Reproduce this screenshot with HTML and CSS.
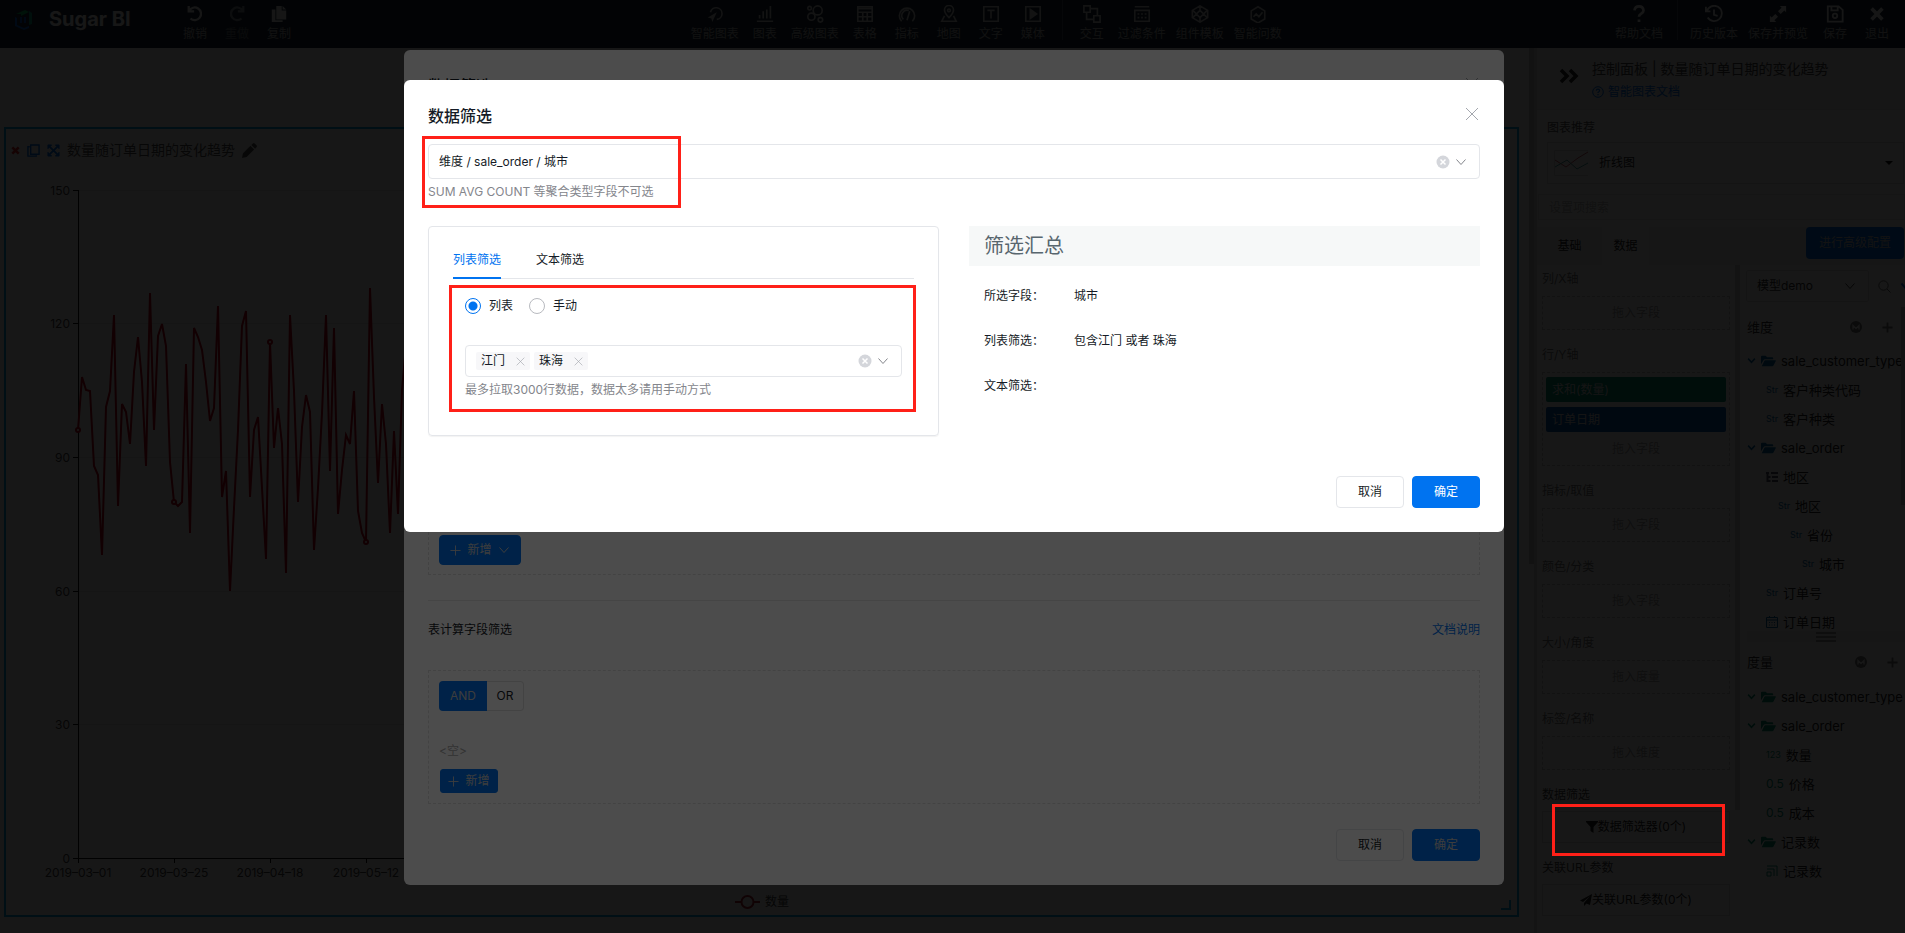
FILE: index.html
```html
<!DOCTYPE html>
<html lang="zh-CN">
<head>
<meta charset="utf-8">
<title>Sugar BI</title>
<link rel="stylesheet" href="styles.css">
</head>
<body>
<svg class="defs" aria-hidden="true">
  <symbol id="i-close" viewBox="0 0 14 14"><path d="M1 1l12 12M13 1L1 13"/></symbol>
  <symbol id="i-down" viewBox="0 0 12 12"><path d="M1.500 3.500L6 8.500l4.500-5"/></symbol>
  <symbol id="i-plus" viewBox="0 0 12 12"><path d="M6 .5v11M.5 6h11"/></symbol>
  <symbol id="i-clear" viewBox="0 0 14 14"><circle cx="7" cy="7" r="6.500" fill="#d4d6db" stroke="none"/><path d="M4.500 4.500l5 5M9.500 4.500l-5 5" stroke="#fff" stroke-width="1.500"/></symbol>
  <symbol id="i-folder" viewBox="0 0 16 12"><path d="M0 9.500V1.500Q0 .5 1 .5h4l1.500 1.500H12q1 0 1 1v1.200H4.200Q3.300 4.200 2.800 5zM.8 11.500L3.500 6Q3.800 5.300 4.600 5.300H15.300q.9 0 .5.800L13.300 10.800q-.4.700-1.200.7z" fill="currentColor" stroke="none"/></symbol>
  <symbol id="i-m" viewBox="0 0 12 12"><circle cx="6" cy="6" r="6" fill="currentColor" stroke="none"/><path d="M3 8.500v-4l3 3 3-3v4" stroke="#fff" stroke-width="1.300"/></symbol>
</svg>

<header class="topbar">
  <div class="brand">
    <svg class="logo" width="20" height="22" viewBox="0 0 20 22"><path d="M2 6l9-4 4 2-8 4v-2z" fill="#00c060"/><path d="M15 3l3 2v11l-3 1z" fill="#00a08a"/><path d="M1 9l2 1v7l7 3 5-2v2l-5 2-9-4z" fill="#0a6ae0"/><path d="M6 9h2v6H6zM10 9h2v6h-2z" fill="#0a5ad0"/></svg>
    <span class="brand-name">Sugar BI</span>
  </div>
  <nav class="tools tools-edit">
    <button class="tool"><svg viewBox="0 0 20 20"><path d="M3 1v6h6M3.500 6.500A7 7 0 1 1 5 15" stroke-width="2.500"/></svg>撤销</button>
    <button class="tool faded"><svg viewBox="0 0 20 20"><path d="M17 1v6h-6M16.500 6.500A7 7 0 1 0 15 15" stroke-width="2.500"/></svg>重做</button>
    <button class="tool"><svg viewBox="0 0 20 20"><path d="M7 1h6v5h5v10H7zM14 1l4 4h-4zM2 5h4v12h8v2H2z" fill="currentColor" stroke="none"/></svg>复制</button>
  </nav>
  <i class="space-a"></i>
  <nav class="tools tools-add">
    <button class="tool"><svg viewBox="0 0 20 20"><path d="M5 8a6.500 6.500 0 1 1 7 8"/><path d="M12 8L2 14l4 1 1 4z" fill="currentColor" stroke="none"/></svg>智能图表</button>
    <button class="tool"><svg viewBox="0 0 20 20"><path d="M1 18h18M4 15v-4M8 15V7M12 15V5M16 15V1"/></svg>图表</button>
    <button class="tool"><svg viewBox="0 0 20 20"><circle cx="4" cy="3.500" r="2"/><circle cx="13" cy="6" r="5"/><circle cx="6" cy="13" r="4"/><circle cx="16" cy="16.500" r="2.500"/></svg>高级图表</button>
    <button class="tool wide-gap"><svg viewBox="0 0 20 20"><path d="M2 2h16v16H2zM2 4h16M2 8h16M2 13h16M7.500 8v10M12.500 8v10"/></svg>表格</button>
    <button class="tool wide-gap"><svg viewBox="0 0 20 20"><path d="M4 18a8.500 8.500 0 1 1 12 0M6 16a6 6 0 0 1 6-10M10 17l3-10"/></svg>指标</button>
    <button class="tool wide-gap"><svg viewBox="0 0 20 20"><path d="M10 14Q5 9 5 5.500a5 5 0 0 1 10 0Q15 9 10 14zM5 12l-3 6h16l-3-6"/><circle cx="10" cy="6" r="1.500"/></svg>地图</button>
    <button class="tool wide-gap"><svg viewBox="0 0 20 20"><path d="M2 2h16v16H2zM6 6h8M10 6v9"/></svg>文字</button>
    <button class="tool"><svg viewBox="0 0 20 20"><path d="M2 2h16v16H2z"/><path d="M7 5l7 5-7 5z" fill="currentColor"/></svg>媒体</button>
    <i class="bar-line"></i>
    <button class="tool"><svg viewBox="0 0 20 20"><path d="M1 1h7v7H1zM12 12h7v7h-7zM8 4h8v8M4 8v8h8"/></svg>交互</button>
    <button class="tool tight-gap"><svg viewBox="0 0 20 20"><path d="M2 2h16M2 6h16v12H2zM5 10h2M9 10h2M13 10h2M5 14h2M9 14h2M13 14h2"/></svg>过滤条件</button>
    <button class="tool tight-gap"><svg viewBox="0 0 20 20"><path d="M10 1l8.500 5v8L10 19l-8.500-5V6zM10 1v5M10 14v5M2 6l4 4-4 4M18 6l-4 4 4 4M10 6l4 4-4 4-4-4z"/></svg>组件模板</button>
    <button class="tool"><svg viewBox="0 0 20 20"><path d="M10 2l7.500 4.500v9L10 20l-7.500-4.500v-9zM5 13l3-3 3 3 4-5"/></svg>智能问数</button>
  </nav>
  <i class="space-b"></i>
  <nav class="tools tools-file">
    <button class="tool"><svg viewBox="0 0 20 20"><path d="M5 6q.5-4.500 5-4.500T15 6q0 2-2.500 3.500Q10 11 10 13M10 16v3" stroke-width="3"/></svg>帮助文档</button>
    <i class="bar-line"></i>
    <button class="tool"><svg viewBox="0 0 20 20"><path d="M1 2v5h5M2 7a8.500 8.500 0 1 1 1 7M10 5v6l4 1" stroke-width="2"/></svg>历史版本</button>
    <button class="tool"><svg viewBox="0 0 20 20"><path d="M12 1h7v7l-2-2-4 4-3-3 4-4zM1 12v7h7l-2-2 4-4-3-3-4 4z" fill="currentColor" stroke="none"/></svg>保存并预览</button>
    <button class="tool"><svg viewBox="0 0 20 20"><path d="M2 1.500h12l4.500 4v13H2zM6 2v4h7V2" stroke-width="2"/><circle cx="10" cy="12" r="2.500" stroke-width="2"/></svg>保存</button>
    <button class="tool"><svg viewBox="0 0 20 20"><path d="M4 4l12 12M16 4L4 16" stroke-width="4"/></svg>退出</button>
  </nav>
</header>

<main class="workspace">
  <section class="canvas">
    <div class="chart">
      <h2 class="chart-title">
        <svg class="red" width="9" height="9" viewBox="0 0 14 14"><path d="M2 2l10 10M12 2L2 12" stroke-width="4"/></svg>
        <svg class="blue" width="13" height="13" viewBox="0 0 14 14"><path d="M4 1h9v10H4zM3 3H1v10h9v-1" stroke-width="1.500"/></svg>
        <svg class="blue" width="13" height="13" viewBox="0 0 14 14"><path d="M1 1h4L1 5zM13 1v4L9 1zM1 13V9l4 4zM13 13H9l4-4z" fill="currentColor"/><path d="M3 3l8 8M11 3l-8 8" stroke-width="2"/></svg>
        <span>数量随订单日期的变化趋势</span>
        <svg width="15" height="15" viewBox="0 0 16 16"><path d="M0 16l1-5 8-8 4 4-8 8zM10 2l1.500-1.500q1-.8 2 0l2 2q.8 1 0 2L14 6z" fill="currentColor" stroke="none"/></svg>
      </h2>
      <svg class="plot" width="100%" height="744">
        <g class="grid"><path d="M72 21.500H1400M72 154.500H1400M72 288.500H1400M72 422.500H1400M72 555.500H1400"/></g>
        <g class="axis"><path d="M72.500 21V690M67 21.500h6M67 154.500h6M67 288.500h6M67 422.500h6M67 555.500h6M67 689.500H1400M72.500 689v5M168.500 689v5M264.500 689v5M360.500 689v5"/></g>
        <g class="ticks" text-anchor="end">
          <text x="64" y="26">150</text><text x="64" y="159">120</text><text x="64" y="293">90</text><text x="64" y="427">60</text><text x="64" y="560">30</text><text x="64" y="694">0</text>
        </g>
        <g class="ticks" text-anchor="middle">
          <text x="72" y="708">2019–03–01</text><text x="168" y="708">2019–03–25</text><text x="264" y="708">2019–04–18</text><text x="360" y="708">2019–05–12</text>
        </g>
        <g class="series" transform="translate(-6 -169)">
          <polyline points="78,430 82,377 86,390 90,391 94,466 98,475 102,555 106,407 110,391 114,315 118,506 122,404 126,412 130,444 134,372 138,337 142,382 146,466 150,293 154,430 158,336 162,324 166,346 170,462 174,502 178,506 182,502 186,364 190,533 194,328 198,337 202,350 206,382 210,421 214,408 218,306 222,497 226,471 230,591 234,508 238,430 242,326 246,311 250,497 254,430 258,417 262,488 266,559 270,342 274,448 278,408 282,444 286,573 290,315 294,391 298,502 302,427 306,395 310,412 314,550 318,488 322,413 326,315 330,471 334,328 338,514 342,470 346,435 350,444 354,391 358,511 362,533 366,542 370,288 374,397 378,483 382,404 386,444 390,533 394,431 398,514 402,390 406,345"/>
          <circle cx="78" cy="430" r="2"/><circle cx="174" cy="502" r="2"/><circle cx="270" cy="342" r="2"/><circle cx="366" cy="542" r="2"/>
        </g>
        <g class="legend"><path d="M729 733h6M748 733h6"/><circle cx="741.500" cy="733" r="6"/><text x="759" y="737">数量</text></g>
      </svg>
      <i class="resize-handle"></i>
    </div>
    <i class="scrollbar"></i>
  </section>

  <aside class="panel">
    <div class="panel-head">
      <svg width="20" height="16" viewBox="0 0 20 16"><path d="M2 2l6 6-6 6M11 2l6 6-6 6" stroke-width="3.500"/></svg>
      <div>
        <h2 class="panel-title">控制面板 | 数量随订单日期的变化趋势</h2>
        <a class="link doc" href="#"><svg width="12" height="12" viewBox="0 0 12 12"><circle cx="6" cy="6" r="5.300"/><path d="M4.300 4.700Q4.500 3.200 6 3.200t1.600 1.400Q7.600 5.500 6 6.500V7M6 8v1.200" stroke-width="1.200"/></svg>智能图表文档</a>
      </div>
    </div>
    <div class="recommend">
      <label for="kind">图表推荐</label>
      <div class="kind">
        <svg width="34" height="26" viewBox="0 0 34 26"><path d="M34 .5H.5v25H34" stroke="#ddd"/><path d="M1 10l11 7L24 8l10-6" stroke="#c05060"/><path d="M1 17l12-7 10 9 11-6" stroke="#3a9a9a"/></svg>
        <select id="kind"><option>折线图</option></select>
        <i class="caret"></i>
      </div>
    </div>
    <input class="search" type="text" placeholder="设置项搜索" aria-label="设置项搜索">
    <div class="panel-tabs">
      <button class="ptab">基础</button><button class="ptab active">数据</button>
      <button class="advanced">进行高级配置</button>
    </div>
    <div class="panel-body">
      <div class="slots">
        <section class="slot"><h3>列/X轴</h3><div class="drop"><span>拖入字段</span></div></section>
        <section class="slot"><h3>行/Y轴</h3><div class="drop"><b class="pill green">求和(数量)</b><b class="pill">订单日期</b><span>拖入字段</span></div></section>
        <section class="slot"><h3>指标/取值</h3><div class="drop"><span>拖入字段</span></div></section>
        <section class="slot"><h3>颜色/分类</h3><div class="drop"><span>拖入字段</span></div></section>
        <section class="slot"><h3>大小/角度</h3><div class="drop"><span>拖入度量</span></div></section>
        <section class="slot"><h3>标签/名称</h3><div class="drop"><span>拖入维度</span></div></section>
        <section class="slot strong"><h3>数据筛选</h3><button class="slot-btn"><svg width="12" height="12" viewBox="0 0 12 12"><path d="M0 0h12v1L7.500 6v6l-3-2V6L0 1z" fill="currentColor" stroke="none"/></svg>数据筛选器(0个)</button></section>
        <section class="slot strong"><h3>关联URL参数</h3><button class="slot-btn"><svg width="12" height="12" viewBox="0 0 12 12"><path d="M12 0l-2 11-3.500-1.500L4 12V9l6-7-7 6-3-1.500z" fill="currentColor" stroke="none"/></svg>关联URL参数(0个)</button></section>
      </div>
      <i class="slots-scroll"></i>
      <div class="fields">
        <div class="model">
          <div class="model-pick"><select aria-label="模型"><option>模型demo</option></select><svg width="12" height="12"><use href="#i-down"/></svg></div>
          <svg width="13" height="13" viewBox="0 0 13 13"><circle cx="5.500" cy="5.500" r="4.700"/><path d="M9 9l3.500 3.500"/></svg>
          <svg class="blue more" width="12" height="12"><use href="#i-down"/></svg>
        </div>
        <div class="group-head"><h3>维度</h3><svg width="12" height="12"><use href="#i-m"/></svg><svg class="add" width="11" height="11"><use href="#i-plus"/></svg></div>
        <ul class="tree dims">
          <li><svg class="fold" width="9" height="9"><use href="#i-down"/></svg><svg width="15" height="12"><use href="#i-folder"/></svg>sale_customer_type</li>
          <li class="l1"><em>Str</em>客户种类代码</li>
          <li class="l1"><em>Str</em>客户种类</li>
          <li><svg class="fold" width="9" height="9"><use href="#i-down"/></svg><svg width="15" height="12"><use href="#i-folder"/></svg>sale_order</li>
          <li class="l1"><svg class="dark" width="12" height="12" viewBox="0 0 12 12"><path d="M0 2h3M1.500 2v8h3M1.500 6h3M5 2h7M6 6h6M6 10h6" stroke-width="2"/></svg>地区</li>
          <li class="l2"><em>Str</em>地区</li>
          <li class="l3"><em>Str</em>省份</li>
          <li class="l4"><em>Str</em>城市</li>
          <li class="l1"><em>Str</em>订单号</li>
          <li class="l1"><svg width="12" height="12" viewBox="0 0 12 12"><path d="M.5 1.500h11v10H.5zM.5 4h11M3.500 0v2M8.500 0v2M3 6.500h1M5.500 6.500h1M8 6.500h1M3 9h1M5.500 9h1M8 9h1"/></svg>订单日期</li>
        </ul>
        <div class="splitter"><svg width="20" height="10" viewBox="0 0 20 10"><path d="M0 1h20M0 5h20M0 9h20"/></svg></div>
        <div class="group-head second"><h3>度量</h3><svg width="12" height="12"><use href="#i-m"/></svg><svg class="add" width="11" height="11"><use href="#i-plus"/></svg></div>
        <ul class="tree measures">
          <li><svg class="fold" width="9" height="9"><use href="#i-down"/></svg><svg width="15" height="12"><use href="#i-folder"/></svg>sale_customer_type</li>
          <li><svg class="fold" width="9" height="9"><use href="#i-down"/></svg><svg width="15" height="12"><use href="#i-folder"/></svg>sale_order</li>
          <li class="l1"><em class="int">123</em>数量</li>
          <li class="l1"><em class="num">0.5</em>价格</li>
          <li class="l1"><em class="num">0.5</em>成本</li>
          <li><svg class="fold" width="9" height="9"><use href="#i-down"/></svg><svg width="15" height="12"><use href="#i-folder"/></svg>记录数</li>
          <li class="l1"><svg width="12" height="12" viewBox="0 0 12 12"><path d="M1 1h10v10M1 4h7v7M1 7h4v4H1z"/></svg>记录数</li>
        </ul>
        <i class="fields-scroll"></i>
      </div>
    </div>
  </aside>
</main>

<div class="overlay lower">
  <section class="dialog dialog-list" aria-label="数据筛选">
    <header class="dialog-head"><h1>数据筛选</h1><button class="icon-btn" aria-label="关闭"><svg width="14" height="14"><use href="#i-close"/></svg></button></header>
    <div class="conditions first"><button class="btn primary add-menu"><svg width="11" height="11"><use href="#i-plus"/></svg>新增<svg width="12" height="12"><use href="#i-down"/></svg></button></div>
    <hr>
    <div class="section-head"><h2>表计算字段筛选</h2><a class="link" href="#">文档说明</a></div>
    <div class="conditions">
      <div class="logic"><button class="on">AND</button><button>OR</button></div>
      <p class="empty">&lt;空&gt;</p>
      <button class="btn primary small"><svg width="11" height="11"><use href="#i-plus"/></svg>新增</button>
    </div>
    <footer class="dialog-foot"><button class="btn">取消</button><button class="btn primary">确定</button></footer>
  </section>
</div>

<div class="overlay upper">
  <section class="dialog dialog-edit" role="dialog" aria-label="数据筛选">
    <header class="dialog-head"><h1>数据筛选</h1><button class="icon-btn" aria-label="关闭"><svg width="14" height="14"><use href="#i-close"/></svg></button></header>
    <div class="field-pick">
      <div class="box">
        <select aria-label="筛选字段"><option>维度 / sale_order / 城市</option></select>
        <button class="icon-btn" aria-label="清空"><svg width="14" height="14"><use href="#i-clear"/></svg></button>
        <svg width="12" height="12"><use href="#i-down"/></svg>
      </div>
      <p class="hint">SUM AVG COUNT 等聚合类型字段不可选</p>
      <i class="mark mark-field"></i>
    </div>
    <div class="columns">
      <div class="card">
        <div class="tabs"><button class="tab active">列表筛选</button><button class="tab">文本筛选</button></div>
        <div class="list-filter">
          <div class="radios">
            <label><input type="radio" name="mode" checked>列表</label>
            <label><input type="radio" name="mode">手动</label>
          </div>
          <div class="box tags">
            <span class="tag">江门<button class="icon-btn" aria-label="移除江门"><svg width="9" height="9"><use href="#i-close"/></svg></button></span>
            <span class="tag">珠海<button class="icon-btn" aria-label="移除珠海"><svg width="9" height="9"><use href="#i-close"/></svg></button></span>
            <input type="text" aria-label="选择城市">
            <button class="icon-btn" aria-label="清空"><svg width="14" height="14"><use href="#i-clear"/></svg></button>
            <svg width="12" height="12"><use href="#i-down"/></svg>
          </div>
          <p class="hint">最多拉取3000行数据，数据太多请用手动方式</p>
          <i class="mark mark-list"></i>
        </div>
      </div>
      <div class="summary">
        <h2>筛选汇总</h2>
        <dl>
          <dt>所选字段：</dt><dd>城市</dd>
          <dt>列表筛选：</dt><dd>包含江门 或者 珠海</dd>
          <dt>文本筛选：</dt><dd></dd>
        </dl>
      </div>
    </div>
    <footer class="dialog-foot"><button class="btn">取消</button><button class="btn primary">确定</button></footer>
  </section>
</div>
<i class="mark mark-button"></i>
</body>
</html>
```

FILE: styles.css
```css
* { box-sizing: border-box; }
body {
  margin: 0;
  height: 100vh;
  overflow: hidden;
  display: flex;
  flex-direction: column;
  background: #fff;
  color: #151b26;
  font: 12px/16px Inter, "Noto Sans CJK SC", sans-serif;
}
h1, h2, h3, p, ul, dl, dd { margin: 0; padding: 0; font-weight: 400; font-size: 12px; }
ul { list-style: none; }
em, i, b { font-style: normal; font-weight: 400; }
button, input, select { font: inherit; color: inherit; background: none; border: 0; padding: 0; margin: 0; }
select { appearance: none; outline: 0; }
svg { fill: none; stroke: currentColor; flex: none; }
.defs { position: absolute; width: 0; height: 0; }
.link { color: #0073f0; text-decoration: none; }
.blue { color: #0073f0; }
.red { color: #e02020; }

/* top bar */
.topbar { height: 48px; flex: none; display: flex; background: #1a2a3a; color: #fff; padding: 0 16px 0 14px; }
.brand { display: flex; align-items: center; gap: 15px; width: 169px; height: 38px; }
.brand-name { font-size: 20px; line-height: 24px; font-weight: 700; }
.logo { stroke: none; }
.tools { display: flex; }
.tools-edit { gap: 18px; }
.tools-add { gap: 14px; }
.tools-file { gap: 10px; }
.space-a { flex: 6; }
.space-b { flex: 5; }
.tool { display: flex; flex-direction: column; align-items: center; padding-top: 5px; gap: 3px; height: 44px; white-space: nowrap; line-height: 16px; color: #b8b8b8; }
.tool svg { width: 18px; height: 18px; stroke-width: 1.800; color: #f4f4f4; }
.tools-add .tool svg { color: #d0d0d0; }
.tools .faded { opacity: .5; }
.wide-gap + .wide-gap { margin-left: 4px; }
.wide-gap + .tool:not(.wide-gap) { margin-left: 4px; }
.tight-gap + .tool { margin-left: -4px; }
.bar-line { width: 1px; height: 40px; background: #4a5560; margin: 0 3px; }
.tools-file .bar-line { margin: 0 2px 0 4px; }
.tools-file .tool:nth-last-child(-n+2) { margin-left: 5px; }
.tools-file .tool:last-child { margin-left: 8px; margin-right: 0; }

/* canvas */
.workspace { flex: 1; display: flex; min-height: 0; }
.canvas { flex: 1; display: flex; min-width: 0; padding: 79px 0 16px 4px; background: #f6f6f6; position: relative; }
.chart { flex: 1; margin-right: 15px; border: 2px solid #00a0e9; background: #fff; position: relative; overflow: hidden; }
.chart-title { display: flex; align-items: center; gap: 7px; height: 40px; padding: 2px 0 0 5px; font-size: 14px; line-height: 20px; color: #555; }
.plot { display: block; color: #444; }
.grid { stroke: #e6e6e6; }
.axis { stroke: #111; }
.ticks, .legend text { fill: #444; stroke: none; font-size: 12px; }
.series { stroke: #c00018; stroke-width: 2; }
.series circle { fill: #fff; }
.legend { stroke: #b02030; stroke-width: 2; }
.resize-handle { position: absolute; right: 6px; bottom: 5px; width: 10px; height: 10px; border: solid #00a0e9; border-width: 0 2px 2px 0; }
.scrollbar { position: absolute; right: 0; top: 0; width: 5px; height: 516px; background: #c4c4c4; }

/* right panel */
.panel { width: 371px; flex: none; display: flex; flex-direction: column; border-left: 3px solid #dcdcdc; background: #fff; color: #222; }
.panel-head { display: flex; align-items: flex-start; gap: 13px; height: 62px; padding: 11px 0 0 22px; background: #eee; border-bottom: 1px solid #e4e4e4; }
.panel-head > svg { margin-top: 9px; }
.panel-title { font-size: 14px; line-height: 20px; color: #444; white-space: nowrap; }
.doc { display: flex; align-items: center; gap: 4px; margin-top: 5px; }
.recommend { padding: 10px 1px 0 10px; }
.recommend label { display: block; color: #555; margin-bottom: 6px; }
.kind { display: flex; align-items: center; gap: 11px; height: 42px; padding: 0 10px 0 6px; border: 1px solid #d8d8d8; }
.kind select { flex: 1; }
.caret { border: 4px solid transparent; border-top-color: #111; border-bottom: 0; }
.search { height: 26px; margin: 10px 0 7px 1px; padding: 0 10px; border: 1px solid #e8e8e8; }
.search::placeholder { color: #b8b8b8; opacity: 1; }
.panel-tabs { display: flex; height: 38px; background: #f2f2f2; padding-right: 1px; }
.ptab { width: 47px; }
.ptab:first-child { width: 65px; }
.ptab.active { background: #fff; }
.advanced { margin-left: auto; width: 98px; height: 32px; background: #0073f0; color: #ccc; border-radius: 4px; }
.panel-body { flex: 1; display: flex; min-height: 0; }
.slots { width: 198px; padding: 6px 5px 0; display: flex; flex-direction: column; gap: 17px; }
.slot h3 { color: #777; margin-bottom: 9px; line-height: 16px; }
.strong h3 { color: #444; margin-bottom: 8px; }
.drop { border: 1px dashed #c4c4c4; padding: 4px 3px; display: flex; flex-direction: column; gap: 5px; text-align: center; color: #a4a4a4; }
.drop span { line-height: 24px; }
.pill { display: block; height: 25px; line-height: 25px; border-radius: 2px; background: #0a5ab0; color: #ddd; text-align: left; padding-left: 6px; }
.pill.green { background: #008c70; }
.slot-btn { width: 100%; height: 32px; display: flex; align-items: center; justify-content: center; border: 1px solid #d8d8d8; color: #222; }
.slots-scroll { width: 5px; height: 545px; background: #d0d0d0; }
.fields { flex: 1; min-width: 0; padding: 5px 0 0 6px; position: relative; overflow: hidden; }
.model { display: flex; align-items: center; gap: 9px; width: 170px; color: #666; }
.model-pick { display: flex; align-items: center; width: 123px; height: 32px; padding: 0 12px 0 10px; border: 1px solid #ddd; border-radius: 2px; color: #333; flex: none; }
.model-pick select { flex: 1; min-width: 0; }
.more { stroke-width: 2; }
.group-head { display: flex; align-items: center; height: 50px; padding-right: 12px; gap: 20px; margin-left: 1px; color: #777; }
.group-head h3 { font-size: 13px; flex: 1; color: #333; }
.add { stroke-width: 2; }
.tree { margin-left: 1px; }
.tree li { height: 29px; display: flex; align-items: center; gap: 5px; font-size: 13px; white-space: nowrap; color: #222; }
.tree svg, .tree em { color: #0068a8; }
.tree .dark { color: #556; }
.tree.measures svg, .tree.measures em { color: #008c70; }
.fold { stroke-width: 2; }
.tree em { font-size: 9px; }
.tree .num { font-size: 12px; }
.tree .l1 { padding-left: 19px; }
.tree .l2 { padding-left: 31px; }
.tree .l3 { padding-left: 43px; }
.tree .l4 { padding-left: 55px; }
.dims { height: 285px; overflow: hidden; margin-top: -6px; }
.splitter { height: 11px; display: flex; align-items: center; justify-content: center; background: #ebebeb; margin-left: 1px; color: #444; }
.group-head.second { height: 40px; padding-right: 7px; }
.fields-scroll { position: absolute; right: 0; top: 42px; width: 4px; height: 198px; background: #c4c4c4; }

/* dialogs */
.overlay { position: fixed; inset: 0; display: flex; justify-content: center; align-items: flex-start; background: rgba(0, 0, 0, .7); padding-left: 3px; }
.lower { padding-top: 50px; }
.upper { padding-top: 80px; }
.dialog { width: 1100px; background: #fff; border-radius: 6px; padding: 24px; }
.dialog-head { display: flex; align-items: flex-start; justify-content: space-between; height: 24px; padding-right: 1px; }
.dialog-head h1 { font-size: 16px; line-height: 24px; font-weight: 500; }
.dialog-head .icon-btn { padding-top: 3px; }
.icon-btn { display: flex; color: #a4a7ae; }
.dialog-foot { display: flex; justify-content: flex-end; gap: 8px; }
.btn { width: 68px; height: 32px; border: 1px solid #e4e6ea; border-radius: 4px; }
.btn.primary { background: #0073f0; border-color: #0073f0; color: #fff; }
.lower .btn.primary, .lower .on { color: #ccc; }
.conditions { border: 1px dashed #e2e2e2; padding: 10px; }
.conditions.first { display: flex; align-items: flex-end; padding-bottom: 9px; height: 427px; margin-top: 50px; }
.conditions .btn { display: flex; align-items: center; justify-content: center; gap: 6px; }
.conditions .add-menu { width: 82px; height: 30px; }
.conditions .small { width: 58px; height: 24px; border-radius: 3px; margin-left: 1px; }
hr { border: 0; height: 1px; background: #e8e8e8; margin: 25px 0 21px; }
.section-head { display: flex; justify-content: space-between; margin-bottom: 32px; }
.logic { display: flex; height: 30px; }
.logic button { width: 37px; border: 1px solid #e0e0e0; border-left: 0; border-radius: 0 4px 4px 0; }
.logic .on { width: 48px; background: #0073f0; border: 0; border-radius: 4px 0 0 4px; }
.empty { color: #aaa; margin: 32px 0 10px; }
.dialog-list .dialog-foot { margin-top: 25px; }

.field-pick { position: relative; margin-top: 16px; }
.box { display: flex; align-items: center; gap: 5px; height: 35px; padding: 0 12px 0 10px; border: 1px solid #e4e6ea; border-radius: 4px; color: #84868c; }
.box select { flex: 1; color: #151b26; }
.box input { flex: 1; min-width: 0; outline: 0; }
.hint { color: #84868c; margin-top: 5px; line-height: 16px; }
.columns { display: grid; grid-template-columns: 1fr 1fr; gap: 30px; margin-top: 26px; }
.card { height: 210px; border: 1px solid #e4e6ea; border-radius: 4px; padding: 24px; box-shadow: 0 1px 1px rgba(0, 0, 0, .05); }
.tabs { display: flex; gap: 35px; height: 28px; border-bottom: 1px solid #e4e6ea; }
.tab { height: 28px; padding-bottom: 8px; border-bottom: 2px solid transparent; }
.tab.active { color: #0073f0; border-color: #0073f0; }
.list-filter { position: relative; padding: 19px 12px 0; }
.radios { display: flex; gap: 16px; height: 16px; }
.radios label { display: flex; align-items: center; gap: 8px; }
.radios input { appearance: none; width: 16px; height: 16px; border: 1px solid #b8babf; border-radius: 50%; }
.radios input:checked { border-color: #0073f0; background: radial-gradient(#0073f0 4px, #fff 5px); }
.tags { height: 32px; margin-top: 31px; gap: 4px; }
.tags > .icon-btn { margin-right: 1px; }
.tag { display: flex; align-items: center; gap: 11px; height: 18px; padding: 0 5px; background: #f7f7f9; border-radius: 2px; color: #151b26; }
.summary h2 { height: 40px; line-height: 40px; padding-left: 15px; font-size: 20px; background: #f6f8f8; color: #58666e; }
.summary dl { display: grid; grid-template-columns: 90px 1fr; padding-left: 15px; row-gap: 29px; margin-top: 22px; line-height: 16px; }
.dialog-edit .dialog-foot { margin-top: 40px; }

/* highlight frames */
.mark { position: absolute; border: 3px solid #ff2018; pointer-events: none; }
.mark-field { left: -6px; top: -8px; width: 259px; height: 72px; }
.mark-list { left: -4px; right: -2px; top: 6px; height: 127px; }
.mark-button { position: fixed; right: 180px; top: 804px; width: 173px; height: 52px; }
```
